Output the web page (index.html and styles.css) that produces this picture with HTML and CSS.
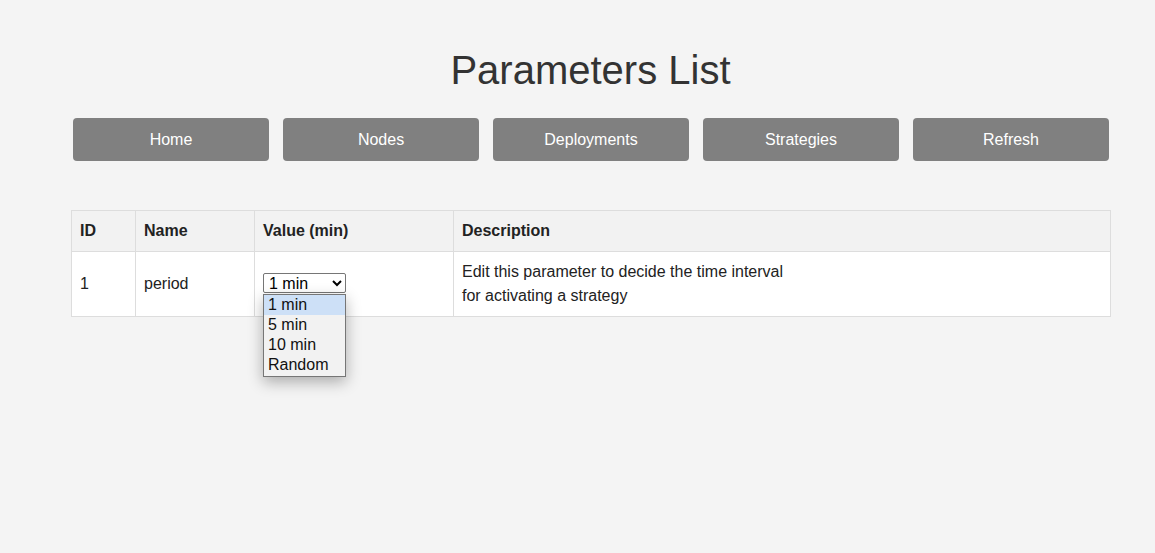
FILE: index.html
```html
<!DOCTYPE html>
<html lang="en">
<head>
<meta charset="utf-8">
<title>Parameters List</title>
<link rel="stylesheet" href="styles.css">
</head>
<body>
<main class="page">
  <h1 class="title">Parameters List</h1>
  <nav class="nav">
    <a class="nav-btn" href="#">Home</a>
    <a class="nav-btn" href="#">Nodes</a>
    <a class="nav-btn" href="#">Deployments</a>
    <a class="nav-btn" href="#">Strategies</a>
    <a class="nav-btn" href="#">Refresh</a>
  </nav>
  <div class="table-wrap">
    <table class="params">
      <colgroup>
        <col class="c-id"><col class="c-name"><col class="c-value"><col class="c-desc">
      </colgroup>
      <thead>
        <tr><th>ID</th><th>Name</th><th>Value (min)</th><th>Description</th></tr>
      </thead>
      <tbody>
        <tr>
          <td>1</td>
          <td>period</td>
          <td>
            <select class="value-select">
              <option>1 min</option>
              <option>5 min</option>
              <option>10 min</option>
              <option>Random</option>
            </select>
          </td>
          <td>Edit this parameter to decide the time interval<br>for activating a strategy</td>
        </tr>
      </tbody>
    </table>
    <div class="dropdown" role="listbox">
      <div class="opt selected">1 min</div>
      <div class="opt">5 min</div>
      <div class="opt">10 min</div>
      <div class="opt">Random</div>
    </div>
  </div>
</main>
</body>
</html>
```
FILE: styles.css
```css
html {
  background: #f4f4f4;
}

body {
  margin: 0;
  padding: 0;
  min-height: 553px;
  font-family: "Liberation Sans", Arial, sans-serif;
  color: #333;
}

.page {
  display: flex;
  flex-direction: column;
  padding: 0 45px 0 71px;
}

.title {
  margin: 47px 0 25px;
  font-size: 40px;
  line-height: 46px;
  font-weight: normal;
  text-align: center;
  color: #333;
}

.nav {
  display: flex;
  gap: 14px;
  padding: 0 0 0 2px;
  margin-bottom: 49px;
}

.nav-btn {
  flex: 0 0 196px;
  height: 43px;
  display: flex;
  align-items: center;
  justify-content: center;
  background: #808080;
  color: #fff;
  border-radius: 4px;
  text-decoration: none;
  font-size: 16px;
}

.table-wrap {
  position: relative;
  padding-bottom: 90px;
}

.params {
  border-collapse: collapse;
  table-layout: fixed;
  width: 1040px;
  font-size: 16px;
  line-height: 24px;
}

.c-id { width: 64px; }
.c-name { width: 119px; }
.c-value { width: 199px; }
.c-desc { width: auto; }

.params th,
.params td {
  border: 1px solid #ddd;
  padding: 8px;
  text-align: left;
  vertical-align: middle;
  color: #222;
}

.params th {
  background: #f2f2f2;
  font-weight: bold;
}

.params td {
  background: #fff;
}

.value-select {
  display: block;
  width: 83px;
  height: 20px;
  margin: -1px 0 1px;
  font-family: "Liberation Sans", Arial, sans-serif;
  font-size: 16px;
  color: #000;
  background: #fff;
  border: 1px solid #767676;
  border-radius: 2px;
  padding: 0 0 0 1px;
}

.dropdown {
  position: absolute;
  left: 192px;
  top: 84px;
  width: 83px;
  box-sizing: border-box;
  background: #f2f2f2;
  border: 1px solid #767676;
  box-shadow: 0 5px 14px rgba(0, 0, 0, 0.3);
  z-index: 10;
}

.opt {
  height: 20px;
  line-height: 20px;
  padding-left: 4px;
  font-size: 16px;
  color: #111;
}

.opt:last-child {
  height: 21px;
}

.opt.selected {
  background: #cde0f7;
}
```
